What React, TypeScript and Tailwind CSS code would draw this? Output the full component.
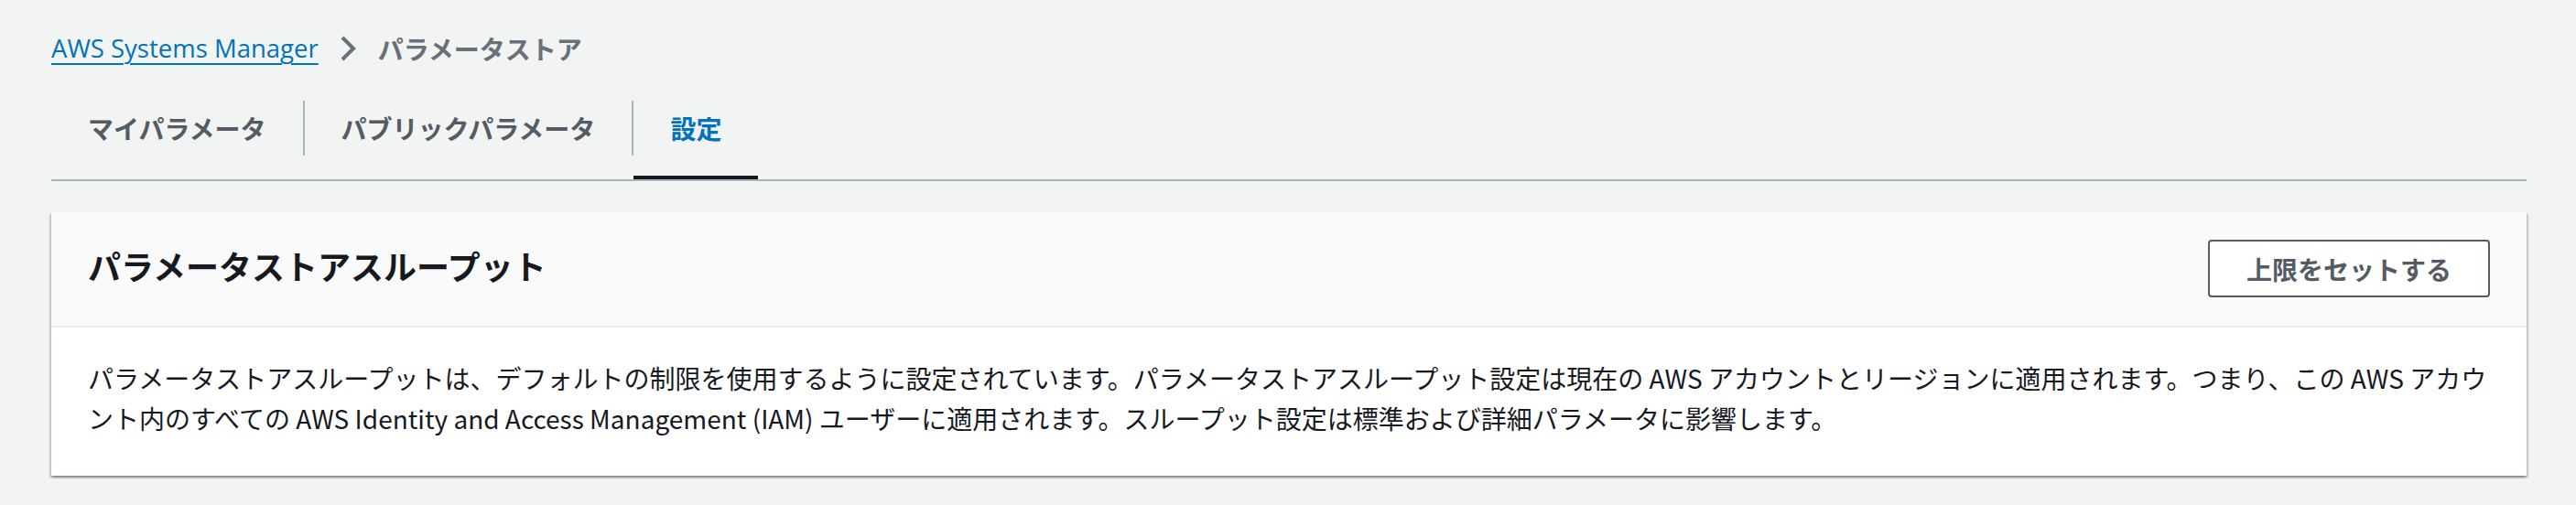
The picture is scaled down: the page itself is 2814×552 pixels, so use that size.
import React from "react";

const tabs = [
  { label: "マイパラメータ", active: false },
  { label: "パブリックパラメータ", active: false },
  { label: "設定", active: true },
];

function Chevron() {
  return (
    <svg width="20" height="28" viewBox="0 0 20 28" fill="none" className="shrink-0 ml-[22px] mr-[23px]">
      <path d="M4 2 L16 14 L4 26" stroke="#687078" strokeWidth="4" strokeLinejoin="miter" />
    </svg>
  );
}

export default function App() {
  return (
    <div className="min-h-screen bg-[#f2f3f3] pl-[56px] pr-[54px] pt-[33px] font-['Noto_Sans_CJK_JP',sans-serif] text-[#16191f]">
      {/* breadcrumb */}
      <nav className="flex items-center h-[40px]">
        <a
          href="#"
          className="font-['Open_Sans','Noto_Sans_CJK_JP',sans-serif] text-[27.5px] leading-[40px] text-[#0073bb] underline decoration-2 underline-offset-[6px]"
        >
          AWS Systems Manager
        </a>
        <Chevron />
        <span className="text-[28px] leading-[40px] font-bold text-[#687078]">パラメータストア</span>
      </nav>

      {/* tabs */}
      <div className="mt-[11px] flex items-center h-[114px] border-b-2 border-[#aab7b8]">
        {tabs.map((t, i) => (
          <React.Fragment key={t.label}>
            {i > 0 && <div className="w-[2px] h-[60px] bg-[#aab7b8]" />}
            <div className="relative h-full flex items-center px-[40px]">
              <span
                className={
                  "text-[28px] leading-[40px] font-bold " +
                  (t.active ? "text-[#0073bb]" : "text-[#545b64]")
                }
              >
                {t.label}
              </span>
              {t.active && <div className="absolute left-0 right-0 bottom-0 h-[4px] bg-[#16191f]" />}
            </div>
          </React.Fragment>
        ))}
      </div>

      {/* container */}
      <div className="mt-[34px] bg-white shadow-[0_2px_2px_0_rgba(0,28,36,0.3),2px_2px_2px_0_rgba(0,28,36,0.15),-2px_2px_2px_0_rgba(0,28,36,0.15)]">
        <div className="flex items-start justify-between bg-[#fafafa] px-[40px] pt-[30px] pb-[31px] border-b-2 border-[#eaeded]">
          <h2 className="text-[36px] leading-[56px] font-bold text-[#16191f]">パラメータストアスループット</h2>
          <button className="h-[63px] px-[40px] rounded-[4px] border-2 border-[#545b64] bg-white text-[28px] font-bold text-[#545b64]">
            上限をセットする
          </button>
        </div>
        <div className="px-[40px] pt-[33px] pb-[41px]">
          <p className="text-[28px] leading-[44px] whitespace-nowrap">
            パラメータストアスループットは、デフォルトの制限を使用するように設定されています。パラメータストアスループット設定は現在の AWS アカウントとリージョンに適用されます。つまり、この AWS アカウ
            <br />
            ント内のすべての AWS Identity and Access Management (IAM) ユーザーに適用されます。スループット設定は標準および詳細パラメータに影響します。
          </p>
        </div>
      </div>
    </div>
  );
}
